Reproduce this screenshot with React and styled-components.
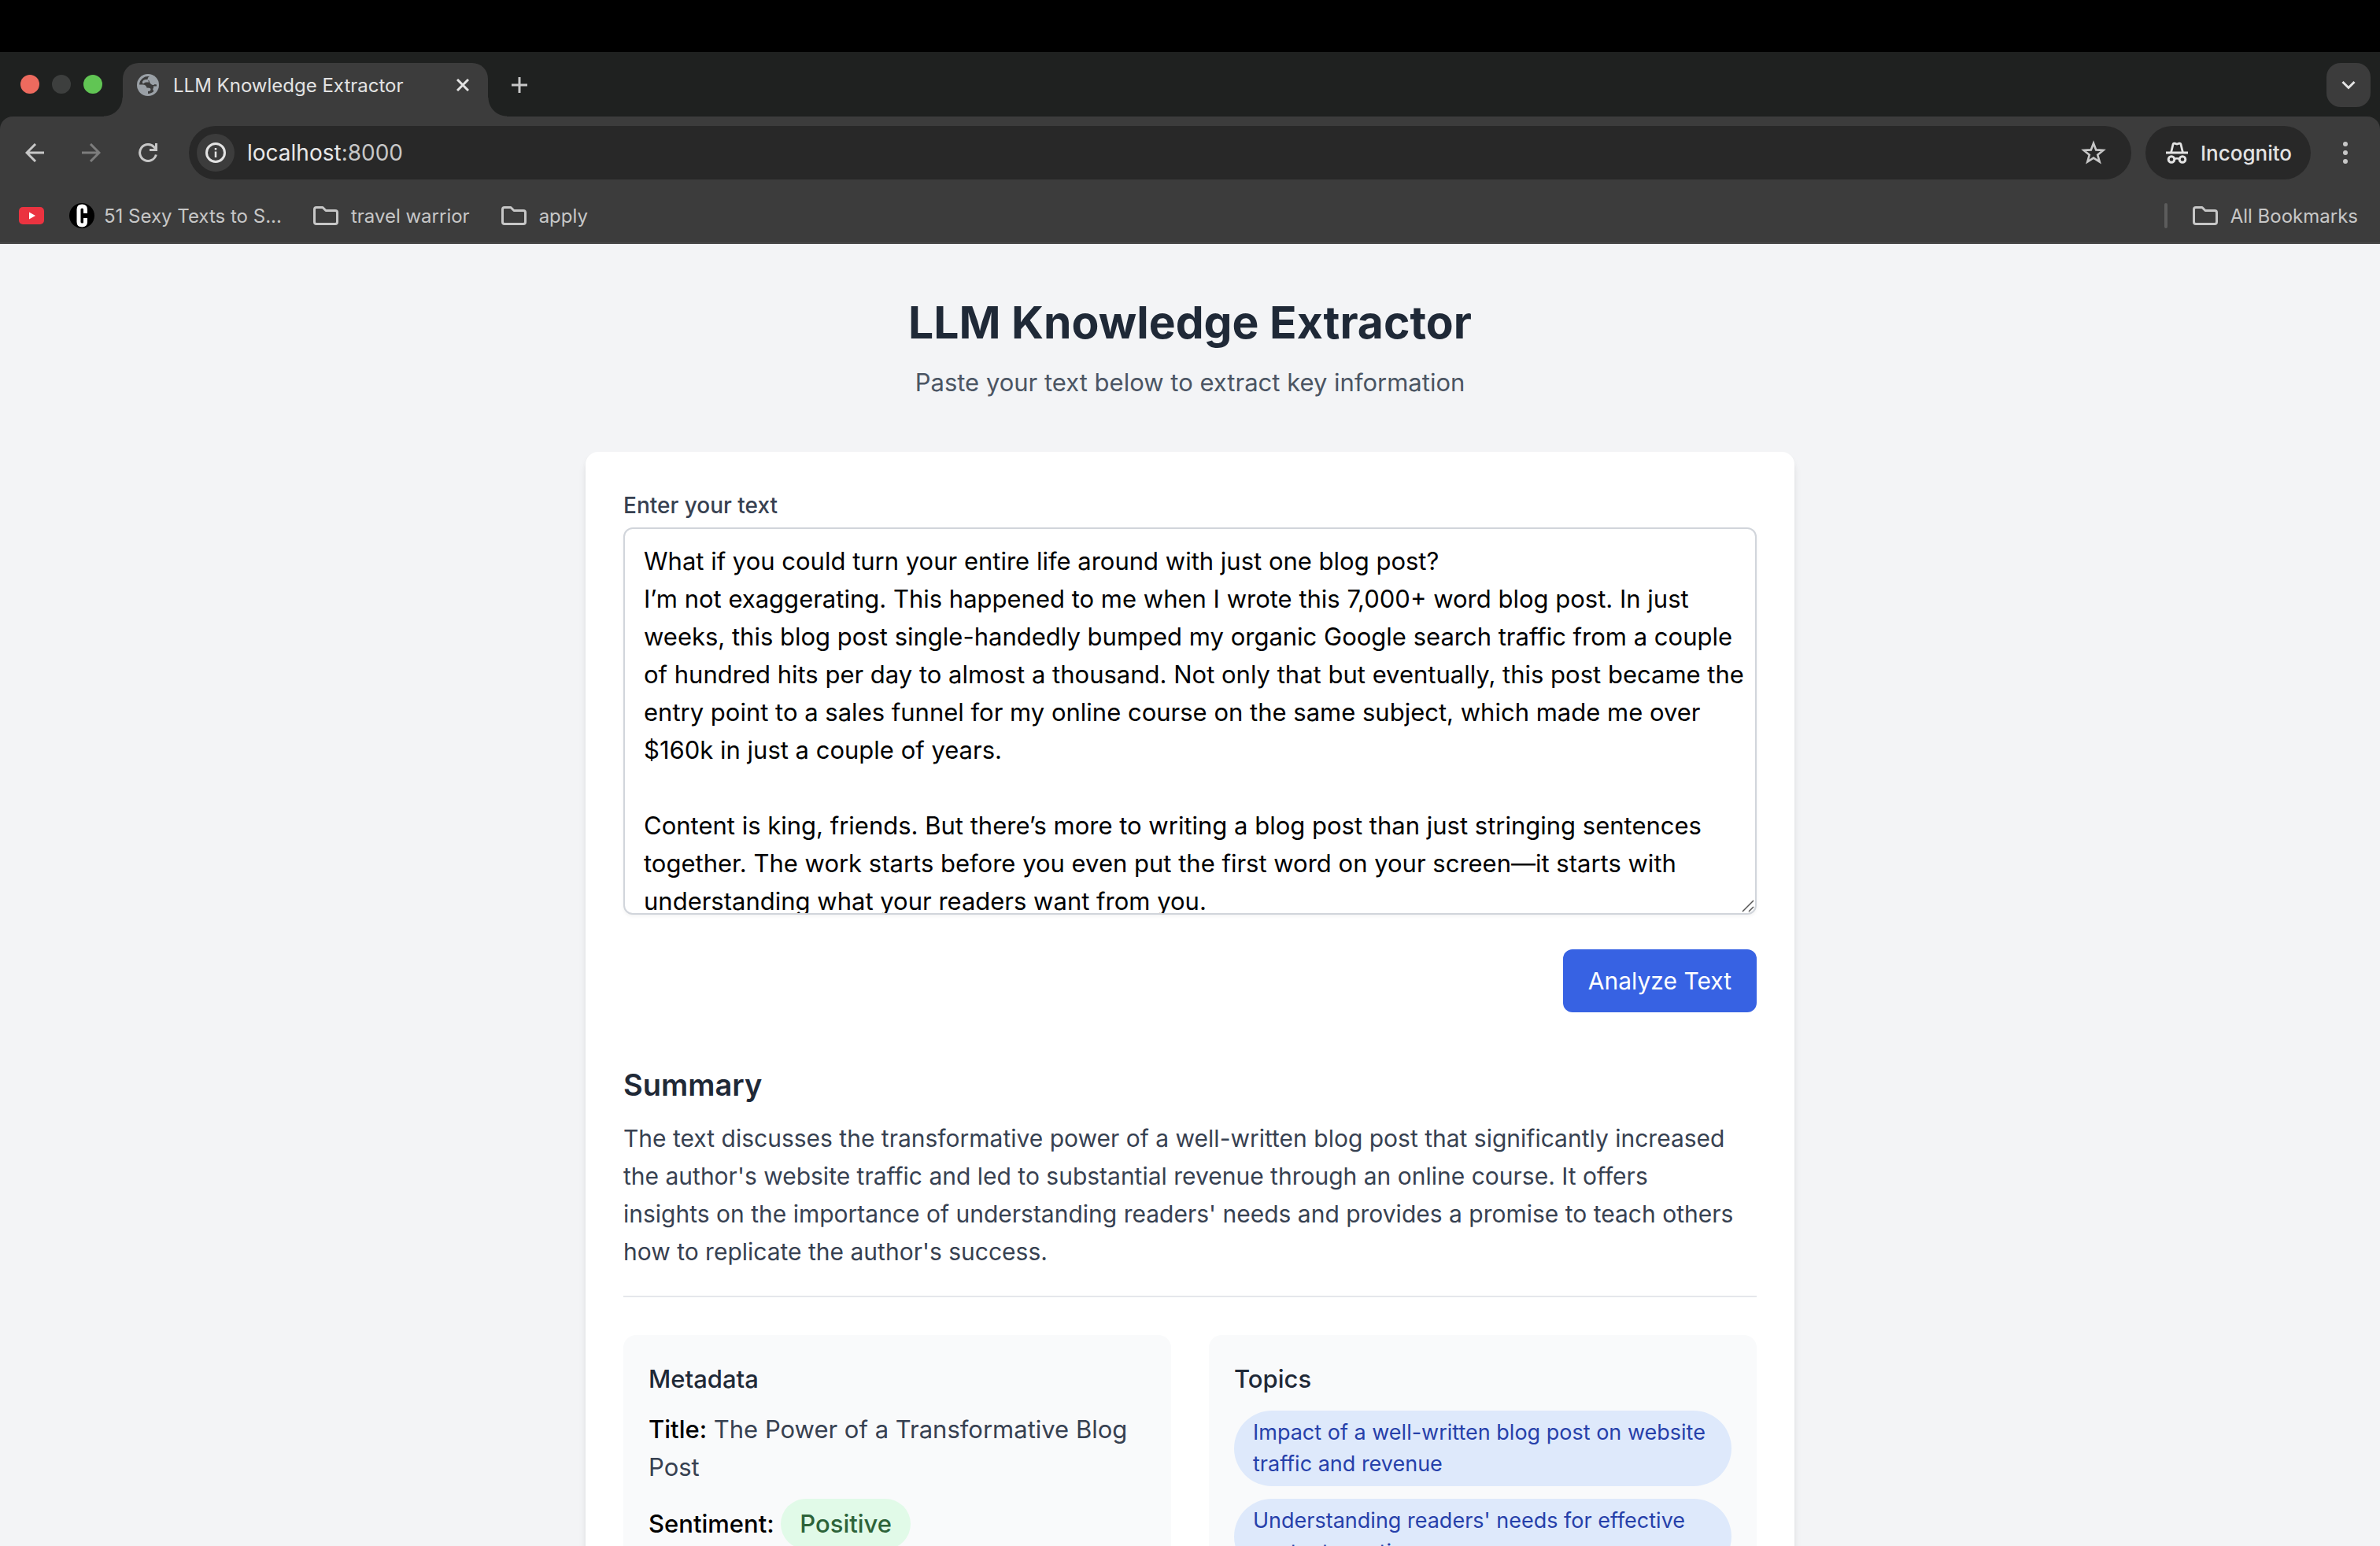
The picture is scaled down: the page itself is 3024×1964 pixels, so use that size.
import React from "react";
import styled, { createGlobalStyle } from "styled-components";

const GlobalStyle = createGlobalStyle`
  *, *::before, *::after { box-sizing: border-box; }
  body { margin: 0; overflow: hidden; }
  body, button, input, textarea {
    font-family: Inter, Roboto, "Liberation Sans", sans-serif;
  }
  h1, h2, h3, p, ul { margin: 0; padding: 0; }
  svg { display: block; flex: none; }
`;

const Screen = styled.div`
  height: 100vh;
  display: flex;
  flex-direction: column;
  background: #1f2120;
  overflow: hidden;
`;

const Notch = styled.div`
  height: 66px;
  flex: none;
  background: #000;
`;

const IconButton = styled.button`
  display: grid;
  place-items: center;
  flex: none;
  width: ${(p) => p.$size || 56}px;
  height: ${(p) => p.$size || 56}px;
  padding: 0;
  border: 0;
  border-radius: ${(p) => p.$radius || 28}px;
  background: ${(p) => p.$bg || "transparent"};
  color: ${(p) => p.$color || "#c7c7c7"};
`;

/* Tab strip */
const TabStrip = styled.div`
  flex: none;
  display: flex;
  align-items: flex-start;
  justify-content: space-between;
  padding: 14px 12px 0 26px;
`;

const TabGroup = styled.div`
  display: flex;
  align-items: flex-start;
`;

const Lights = styled.div`
  display: flex;
  gap: 16px;
  padding: 15px 26px 0 0;
`;

const Light = styled.span`
  width: 24px;
  height: 24px;
  border-radius: 50%;
  background: ${(p) => p.$color};
`;

const Tab = styled.div`
  position: relative;
  display: flex;
  align-items: center;
  width: 464px;
  height: 68px;
  padding: 0 12px 12px 18px;
  border-radius: 20px 20px 0 0;
  background: #3c3c3c;
  color: #e3e3e3;
  font-size: 24px;
  &::before,
  &::after {
    content: "";
    position: absolute;
    bottom: 0;
    width: 24px;
    height: 24px;
  }
  &::before {
    right: 100%;
    background: radial-gradient(circle at 0 0, transparent 23px, #3c3c3c 24px);
  }
  &::after {
    left: 100%;
    background: radial-gradient(circle at 100% 0, transparent 23px, #3c3c3c 24px);
  }
`;

const TabTitle = styled.span`
  flex: 1;
  margin-left: 18px;
  white-space: nowrap;
`;

const NewTab = styled.div`
  padding: 0 0 0 12px;
`;

/* Toolbar */
const Toolbar = styled.div`
  flex: none;
  border-radius: 16px 16px 0 0;
  background: #3c3c3c;
  border-bottom: 2px solid #4a4a4a;
`;

const AddressRow = styled.div`
  display: flex;
  align-items: center;
  gap: 16px;
  padding: 12px 16px;
`;

const Omnibox = styled.div`
  flex: 1;
  display: flex;
  align-items: center;
  height: 68px;
  margin-left: 8px;
  padding: 0 20px 0 10px;
  border-radius: 34px;
  background: #282828;
`;

const Address = styled.div`
  flex: 1;
  margin-left: 16px;
  font-size: 28px;
  color: #c7c7c7;
`;

const Host = styled.span`
  color: #e8e8e8;
`;

const IncognitoChip = styled.button`
  display: flex;
  align-items: center;
  gap: 16px;
  height: 68px;
  margin-left: 2px;
  padding: 0 24px 0 26px;
  border: 0;
  border-radius: 34px;
  background: #282828;
  color: #e3e3e3;
  font-size: 26px;
  font-weight: 500;
`;

const BookmarkBar = styled.nav`
  display: flex;
  justify-content: space-between;
  align-items: center;
  height: 68px;
  padding: 0 28px 0 24px;
`;

const BookmarkGroup = styled.div`
  display: flex;
  align-items: center;
  gap: ${(p) => p.$gap}px;
`;

const Bookmark = styled.a`
  display: flex;
  align-items: center;
  gap: ${(p) => p.$gap || 16}px;
  color: #c7c7c7;
  font-size: 24px;
  text-decoration: none;
  white-space: nowrap;
`;

const Separator = styled.span`
  width: 4px;
  height: 32px;
  border-radius: 2px;
  background: #5c5c5c;
`;

/* Page */
const Page = styled.main`
  flex: 1;
  min-height: 0;
  overflow: hidden;
  padding: 64px 32px;
  background: #f3f4f6;
`;

const Container = styled.div`
  max-width: 1536px;
  margin: 0 auto;
`;

const Header = styled.header`
  margin-bottom: 64px;
  text-align: center;
`;

const Title = styled.h1`
  font-size: 57px;
  line-height: 72px;
  font-weight: 700;
  color: #1f2937;
`;

const Subtitle = styled.p`
  margin-top: 16px;
  font-size: 31px;
  line-height: 48px;
  color: #4b5563;
`;

const Card = styled.section`
  padding: 48px;
  border-radius: 16px;
  background: #fff;
  box-shadow: 0 8px 12px -2px rgba(0, 0, 0, 0.1), 0 4px 8px -4px rgba(0, 0, 0, 0.1);
`;

const Form = styled.form`
  display: flex;
  flex-direction: column;
`;

const Label = styled.label`
  font-size: 28px;
  line-height: 40px;
  font-weight: 500;
  color: #374151;
`;

const FieldFrame = styled.div`
  position: relative;
  margin-top: 8px;
`;

const TextArea = styled.textarea`
  display: block;
  width: 100%;
  height: 492px;
  padding: 17px 8px 17px 24px;
  border: 2px solid #d1d5db;
  border-radius: 12px;
  background: #fff;
  box-shadow: 0 2px 4px rgba(0, 0, 0, 0.05);
  color: #000;
  font-size: 31px;
  line-height: 48px;
  resize: none;
  overflow: hidden;
`;

const Grip = styled.svg`
  position: absolute;
  right: 3px;
  bottom: 3px;
`;

const SubmitButton = styled.button`
  align-self: flex-end;
  height: 80px;
  margin-top: 44px;
  padding: 0 32px;
  border: 0;
  border-radius: 12px;
  background: #3762e3;
  color: #fff;
  font-size: 30px;
  line-height: 48px;
`;

const Summary = styled.section`
  margin-top: 64px;
  padding-bottom: 32px;
  border-bottom: 2px solid #e5e7eb;
`;

const SectionTitle = styled.h2`
  font-size: 38px;
  line-height: 56px;
  font-weight: 600;
  color: #1f2937;
`;

const SummaryText = styled.p`
  margin-top: 16px;
  font-size: 30px;
  line-height: 48px;
  color: #374151;
`;

const Panels = styled.div`
  display: grid;
  grid-template-columns: 1fr 1fr;
  gap: 48px;
  margin-top: 48px;
`;

const Panel = styled.section`
  padding: 32px;
  border-radius: 16px;
  background: #f9fafb;
`;

const PanelTitle = styled.h3`
  margin-bottom: 16px;
  font-size: 31px;
  line-height: 48px;
  font-weight: 500;
  color: #1f2937;
`;

const Stack = styled.div`
  display: flex;
  flex-direction: column;
  gap: 16px;
`;

const MetaLine = styled.p`
  font-size: 31px;
  line-height: 48px;
  color: #374151;
`;

const MetaKey = styled.span`
  font-weight: 500;
  color: #000;
`;

const Sentiment = styled.span`
  display: inline-block;
  padding: 8px 24px;
  border-radius: 32px;
  background: #e1fae8;
  color: #2d6339;
  font-weight: 500;
`;

const TopicList = styled.ul`
  display: flex;
  flex-wrap: wrap;
  gap: 16px;
  list-style: none;
`;

const Topic = styled.li`
  padding: 8px 24px;
  border-radius: 48px;
  background: #dee9fb;
  color: #2640aa;
  font-size: 27px;
  line-height: 40px;
`;

const stroke = (width) => ({
  fill: "none",
  stroke: "currentColor",
  strokeWidth: width,
});

const GlobeIcon = () => (
  <svg width="28" height="28" viewBox="0 0 28 28">
    <circle cx="14" cy="14" r="14" fill="#9aa0a6" />
    <path
      fill="#3c3c3c"
      d="M3 13.500A11 11 0 0 1 16 3.200Q13.500 4 13.500 6.500q0 1.500 1.800 1.800.7 3 2.200 4.200 1.500 1.500 3.500 1.500 1 0 1.500-1l2.500.500A11 11 0 0 1 14 25v-3q3.500 0 3.500-2.500 0-1.500-2-1.700l-3-.300q-1-4-5-4Z"
    />
    <path fill="#9aa0a6" d="M7 9.500q1-2.500 4-2.500h3l1 3.500h-3.500Q9 10.500 9 12H7Z" />
    <path fill="#9aa0a6" d="M21 15.500h6L24 22l-3 1.500q.500-3-1-4.500 1.500-1 1-3.500Z" />
  </svg>
);

const FolderIcon = () => (
  <svg width="32" height="24" viewBox="0 0 32 24" {...stroke(3)} strokeLinejoin="round">
    <path d="M1.500 20V4Q1.500 1.500 4 1.500h8l4 4h12q2.500 0 2.500 2.500v12q0 2.500-2.500 2.500H4q-2.500 0-2.500-2.500Z" />
  </svg>
);

const text = `What if you could turn your entire life around with just one blog post?
I’m not exaggerating. This happened to me when I wrote this 7,000+ word blog post. In just weeks, this blog post single-handedly bumped my organic Google search traffic from a couple of hundred hits per day to almost a thousand. Not only that but eventually, this post became the entry point to a sales funnel for my online course on the same subject, which made me over $160k in just a couple of years.

Content is king, friends. But there’s more to writing a blog post than just stringing sentences together. The work starts before you even put the first word on your screen—it starts with understanding what your readers want from you.`;

const topics = [
  "Impact of a well-written blog post on website traffic and revenue",
  "Understanding readers' needs for effective content creation",
];

function BrowserChrome() {
  return (
    <>
      <TabStrip>
        <TabGroup>
          <Lights>
            <Light $color="#ed6a5e" />
            <Light $color="#3d3f3e" />
            <Light $color="#61c554" />
          </Lights>
          <Tab>
            <GlobeIcon />
            <TabTitle>LLM Knowledge Extractor</TabTitle>
            <IconButton $size={40} $color="#e3e3e3" aria-label="Close tab">
              <svg width="16" height="16" viewBox="0 0 16 16" {...stroke(3)}>
                <path d="M1 1l14 14M15 1 1 15" />
              </svg>
            </IconButton>
          </Tab>
          <NewTab>
            <IconButton aria-label="New tab">
              <svg width="20" height="20" viewBox="0 0 20 20" {...stroke(3)}>
                <path d="M10 0v20M0 10h20" />
              </svg>
            </IconButton>
          </NewTab>
        </TabGroup>
        <IconButton $bg="#3c3c3c" $radius={18} $color="#e3e3e3" aria-label="Search tabs">
          <svg width="18" height="12" viewBox="0 0 18 12" {...stroke(3)}>
            <path d="M1.500 2 9 9.500 16.500 2" />
          </svg>
        </IconButton>
      </TabStrip>
      <Toolbar>
        <AddressRow>
          <IconButton aria-label="Back">
            <svg width="24" height="24" viewBox="0 0 24 24" {...stroke(3)}>
              <path d="M24 12H2M13 1 2 12l11 11" />
            </svg>
          </IconButton>
          <IconButton $color="#7d7d7d" aria-label="Forward">
            <svg width="24" height="24" viewBox="0 0 24 24" {...stroke(3)}>
              <path d="M0 12h22M11 1l11 11-11 11" />
            </svg>
          </IconButton>
          <IconButton aria-label="Reload">
            <svg width="24" height="24" viewBox="0 0 24 24" {...stroke(3)}>
              <path d="M22.300 14.500A10.500 10.500 0 1 1 20 5l2 2.500M22.500 0v8.500H14" />
            </svg>
          </IconButton>
          <Omnibox>
            <IconButton $size={48} $bg="#3c3c3c" $color="#e3e3e3" aria-label="Site information">
              <svg width="26" height="26" viewBox="0 0 26 26" {...stroke(3)}>
                <circle cx="13" cy="13" r="11.500" />
                <path d="M13 11.500V19M13 7v2.500" strokeWidth="2.500" />
              </svg>
            </IconButton>
            <Address>
              <Host>localhost</Host>:8000
            </Address>
            <IconButton aria-label="Bookmark this page">
              <svg width="32" height="32" viewBox="0 0 32 32" {...stroke(2.6)}>
                <path d="m16 4 3.200 8.400 9.200.500-7.200 5.800 2.500 8.900L16 22.600l-7.700 5 2.500-8.900-7.200-5.800 9.200-.500Z" />
              </svg>
            </IconButton>
          </Omnibox>
          <IncognitoChip>
            <svg width="28" height="28" viewBox="0 0 28 28" {...stroke(3)}>
              <path d="M0 14h28" />
              <path d="M6.500 14 9 3.500Q9.500 1.800 11 2.200l3 .800 3-.800q1.500-.400 2 1.300L21.500 14" strokeWidth="2.800" />
              <circle cx="7" cy="22.500" r="3.800" />
              <circle cx="21" cy="22.500" r="3.800" />
              <path d="M10.500 22q3.500-1.600 7 0" strokeWidth="2.500" />
            </svg>
            Incognito
          </IncognitoChip>
          <IconButton aria-label="Menu">
            <svg width="6" height="28" viewBox="0 0 6 28" fill="currentColor">
              <circle cx="3" cy="3" r="3" />
              <circle cx="3" cy="14" r="3" />
              <circle cx="3" cy="25" r="3" />
            </svg>
          </IconButton>
        </AddressRow>
        <BookmarkBar>
          <BookmarkGroup $gap={40}>
            <BookmarkGroup $gap={32}>
              <Bookmark href="#youtube" aria-label="YouTube">
                <svg width="32" height="22" viewBox="0 0 32 22">
                  <rect width="32" height="22" rx="5" fill="#eb3340" />
                  <path d="M13 6.500 21 11l-8 4.500Z" fill="#fff" />
                </svg>
              </Bookmark>
              <Bookmark href="#texts" $gap={12}>
                <svg width="32" height="32" viewBox="0 0 32 32">
                  <circle cx="16" cy="16" r="16" fill="#000" />
                  <path
                    d="M20.500 13V8Q20.500 4 16.300 4T12 8v16q0 4 4.300 4t4.200-4v-5"
                    fill="none"
                    stroke="#fff"
                    strokeWidth="5"
                  />
                </svg>
                51 Sexy Texts to S...
              </Bookmark>
            </BookmarkGroup>
            <Bookmark href="#travel">
              <FolderIcon />
              travel warrior
            </Bookmark>
            <Bookmark href="#apply">
              <FolderIcon />
              apply
            </Bookmark>
          </BookmarkGroup>
          <BookmarkGroup $gap={32}>
            <Separator />
            <Bookmark href="#all">
              <FolderIcon />
              All Bookmarks
            </Bookmark>
          </BookmarkGroup>
        </BookmarkBar>
      </Toolbar>
    </>
  );
}

export default function App() {
  return (
    <Screen>
      <GlobalStyle />
      <Notch />
      <BrowserChrome />
      <Page>
        <Container>
          <Header>
            <Title>LLM Knowledge Extractor</Title>
            <Subtitle>Paste your text below to extract key information</Subtitle>
          </Header>
          <Card>
            <Form onSubmit={(e) => e.preventDefault()}>
              <Label htmlFor="source">Enter your text</Label>
              <FieldFrame>
                <TextArea id="source" defaultValue={text} spellCheck={false} />
                <Grip width="16" height="16" viewBox="0 0 16 16" stroke="#555" strokeWidth="1.500">
                  <path d="M1 15 15 1M9 15l6-6" />
                </Grip>
              </FieldFrame>
              <SubmitButton type="submit">Analyze Text</SubmitButton>
            </Form>
            <Summary>
              <SectionTitle>Summary</SectionTitle>
              <SummaryText>
                The text discusses the transformative power of a well-written blog post that
                significantly increased
                <br />
                the author's website traffic and led to substantial revenue through an online
                course. It offers
                <br />
                insights on the importance of understanding readers' needs and provides a promise to
                teach others
                <br />
                how to replicate the author's success.
              </SummaryText>
            </Summary>
            <Panels>
              <Panel>
                <PanelTitle>Metadata</PanelTitle>
                <Stack>
                  <MetaLine>
                    <MetaKey>Title:</MetaKey> The Power of a Transformative Blog Post
                  </MetaLine>
                  <MetaLine>
                    <MetaKey>Sentiment:</MetaKey> <Sentiment>Positive</Sentiment>
                  </MetaLine>
                </Stack>
              </Panel>
              <Panel>
                <PanelTitle>Topics</PanelTitle>
                <TopicList>
                  {topics.map((topic) => (
                    <Topic key={topic}>{topic}</Topic>
                  ))}
                </TopicList>
              </Panel>
            </Panels>
          </Card>
        </Container>
      </Page>
    </Screen>
  );
}
